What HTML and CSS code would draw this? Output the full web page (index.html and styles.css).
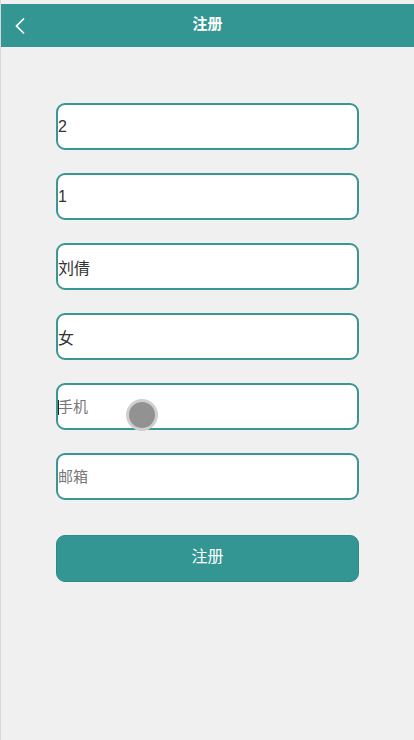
FILE: index.html
```html
<!DOCTYPE html>
<html lang="zh">
<head>
<meta charset="utf-8">
<title>注册</title>
<link rel="stylesheet" href="styles.css">
</head>
<body>
<div class="page">
  <header class="bar">
    <span class="back">
      <svg width="14" height="20" viewBox="0 0 14 20"><path d="M11 2.5 L3.5 10 L11 17.5" fill="none" stroke="#fff" stroke-width="1.7"/></svg>
    </span>
    <h1 class="title">注册</h1>
  </header>
  <form class="form">
    <div class="field"><input class="input" type="text" value="2"></div>
    <div class="field"><input class="input" type="text" value="1"></div>
    <div class="field"><input class="input" type="text" value="刘倩"></div>
    <div class="field"><input class="input" type="text" value="女"></div>
    <div class="field focus"><span class="caret"></span><input class="input" type="text" placeholder="手机"><span class="touch"></span></div>
    <div class="field"><input class="input" type="text" placeholder="邮箱"></div>
    <button class="submit" type="button"><span class="label">注册</span></button>
  </form>
</div>
</body>
</html>
```
FILE: styles.css
```css
html, body {
  margin: 0;
  padding: 0;
  background: #f0f0f0;
  height: 100%;
}
body {
  font-family: "Liberation Sans", "Noto Sans CJK SC", sans-serif;
}
.page {
  min-height: 740px;
  box-sizing: border-box;
  padding-top: 4px;
  border-left: 1px solid #d8d8d8;
}
.bar {
  height: 43px;
  background: #339693;
  display: flex;
  align-items: center;
  justify-content: center;
  position: relative;
}
.back {
  position: absolute;
  left: 12px;
  top: 12px;
  display: flex;
}
.title {
  margin: 0 0 5px;
  font-size: 15px;
  line-height: 18px;
  font-weight: bold;
  color: #fff;
  font-family: "Noto Sans CJK SC", sans-serif;
}
.form {
  display: flex;
  flex-direction: column;
  gap: 23px;
  padding: 56px 0 0 55px;
  width: 303px;
}
.field {
  position: relative;
  height: 47px;
  box-sizing: border-box;
  border: 2px solid #3a9693;
  border-radius: 9px;
  background: #fff;
  display: flex;
  align-items: center;
}
.input {
  border: none;
  outline: none;
  background: transparent;
  width: 100%;
  padding: 0;
  font-size: 16px;
  color: #333;
  font-family: "Liberation Sans", "Noto Sans CJK SC", sans-serif;
}
.input::placeholder {
  color: #777;
  font-size: 15px;
}
.caret {
  position: absolute;
  left: 0;
  top: 15px;
  width: 1px;
  height: 15px;
  background: #222;
}
.touch {
  position: absolute;
  left: 68px;
  top: 14px;
  width: 26px;
  height: 26px;
  border-radius: 50%;
  background: #929292;
  border: 3px solid #cfcfcf;
}
.submit {
  margin-top: 12px;
  height: 47px;
  border: 1px solid #2f8a87;
  border-radius: 9px;
  background: #339693;
  color: #fff;
  font-size: 16px;
  font-family: "Noto Sans CJK SC", sans-serif;
  padding: 0 0 7px;
  line-height: 20px;
}
```
